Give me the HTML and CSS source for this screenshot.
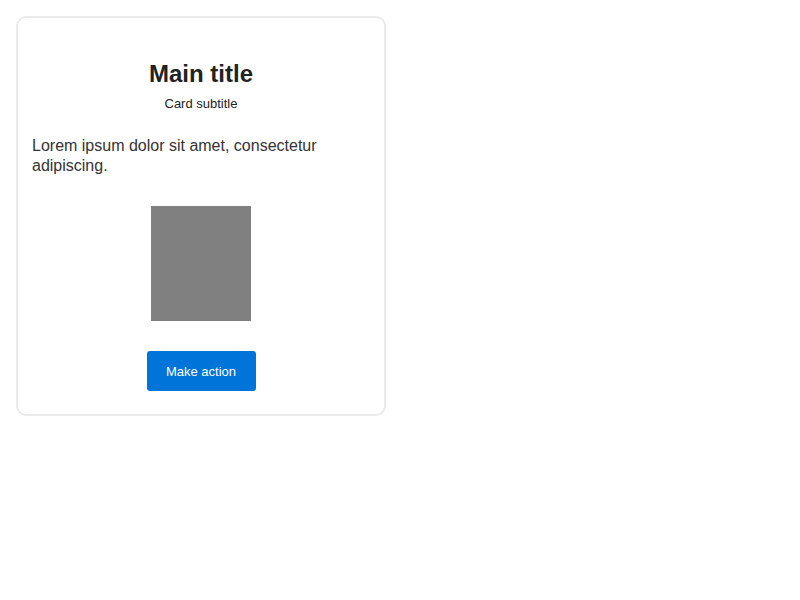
FILE: index.html
```html
<!DOCTYPE html>
<html>
<head>
<meta charset="utf-8">
<link rel="stylesheet" href="styles.css">
</head>
<body>
<div class="card">
  <h1 class="title">Main title</h1>
  <p class="subtitle">Card subtitle</p>
  <p class="text">Lorem ipsum dolor sit amet, consectetur adipiscing.</p>
  <div class="media"><div class="image"></div></div>
  <div class="actions"><button class="btn">Make action</button></div>
</div>
</body>
</html>
```
FILE: styles.css
```css
html, body { background: #fff; }
body {
  margin: 16px;
  font-family: "Liberation Sans", Arial, sans-serif;
  color: #222;
}
.card {
  box-sizing: border-box;
  width: 370px;
  border: 2px solid #ebebeb;
  border-radius: 10px;
  padding: 14px 14px 23px;
  display: flex;
  flex-direction: column;
}
.title {
  margin: 28px 0 0;
  font-size: 24px;
  line-height: 28px;
  font-weight: bold;
  text-align: center;
  color: #222;
}
.subtitle {
  margin: 8px 0 0;
  font-size: 13px;
  line-height: 16px;
  text-align: center;
  color: #222;
}
.text {
  margin: 24px 0 0;
  font-size: 16px;
  line-height: 20px;
  color: #333;
}
.media {
  margin-top: 30px;
  display: flex;
  justify-content: center;
}
.image {
  width: 100px;
  height: 115px;
  background: #808080;
}
.actions {
  margin-top: 30px;
  display: flex;
  justify-content: center;
}
.btn {
  height: 40px;
  width: 109px;
  padding: 0;
  border: none;
  border-radius: 3px;
  background: #0074d9;
  color: #fff;
  font-family: "Liberation Sans", Arial, sans-serif;
  font-size: 13px;
}
```
